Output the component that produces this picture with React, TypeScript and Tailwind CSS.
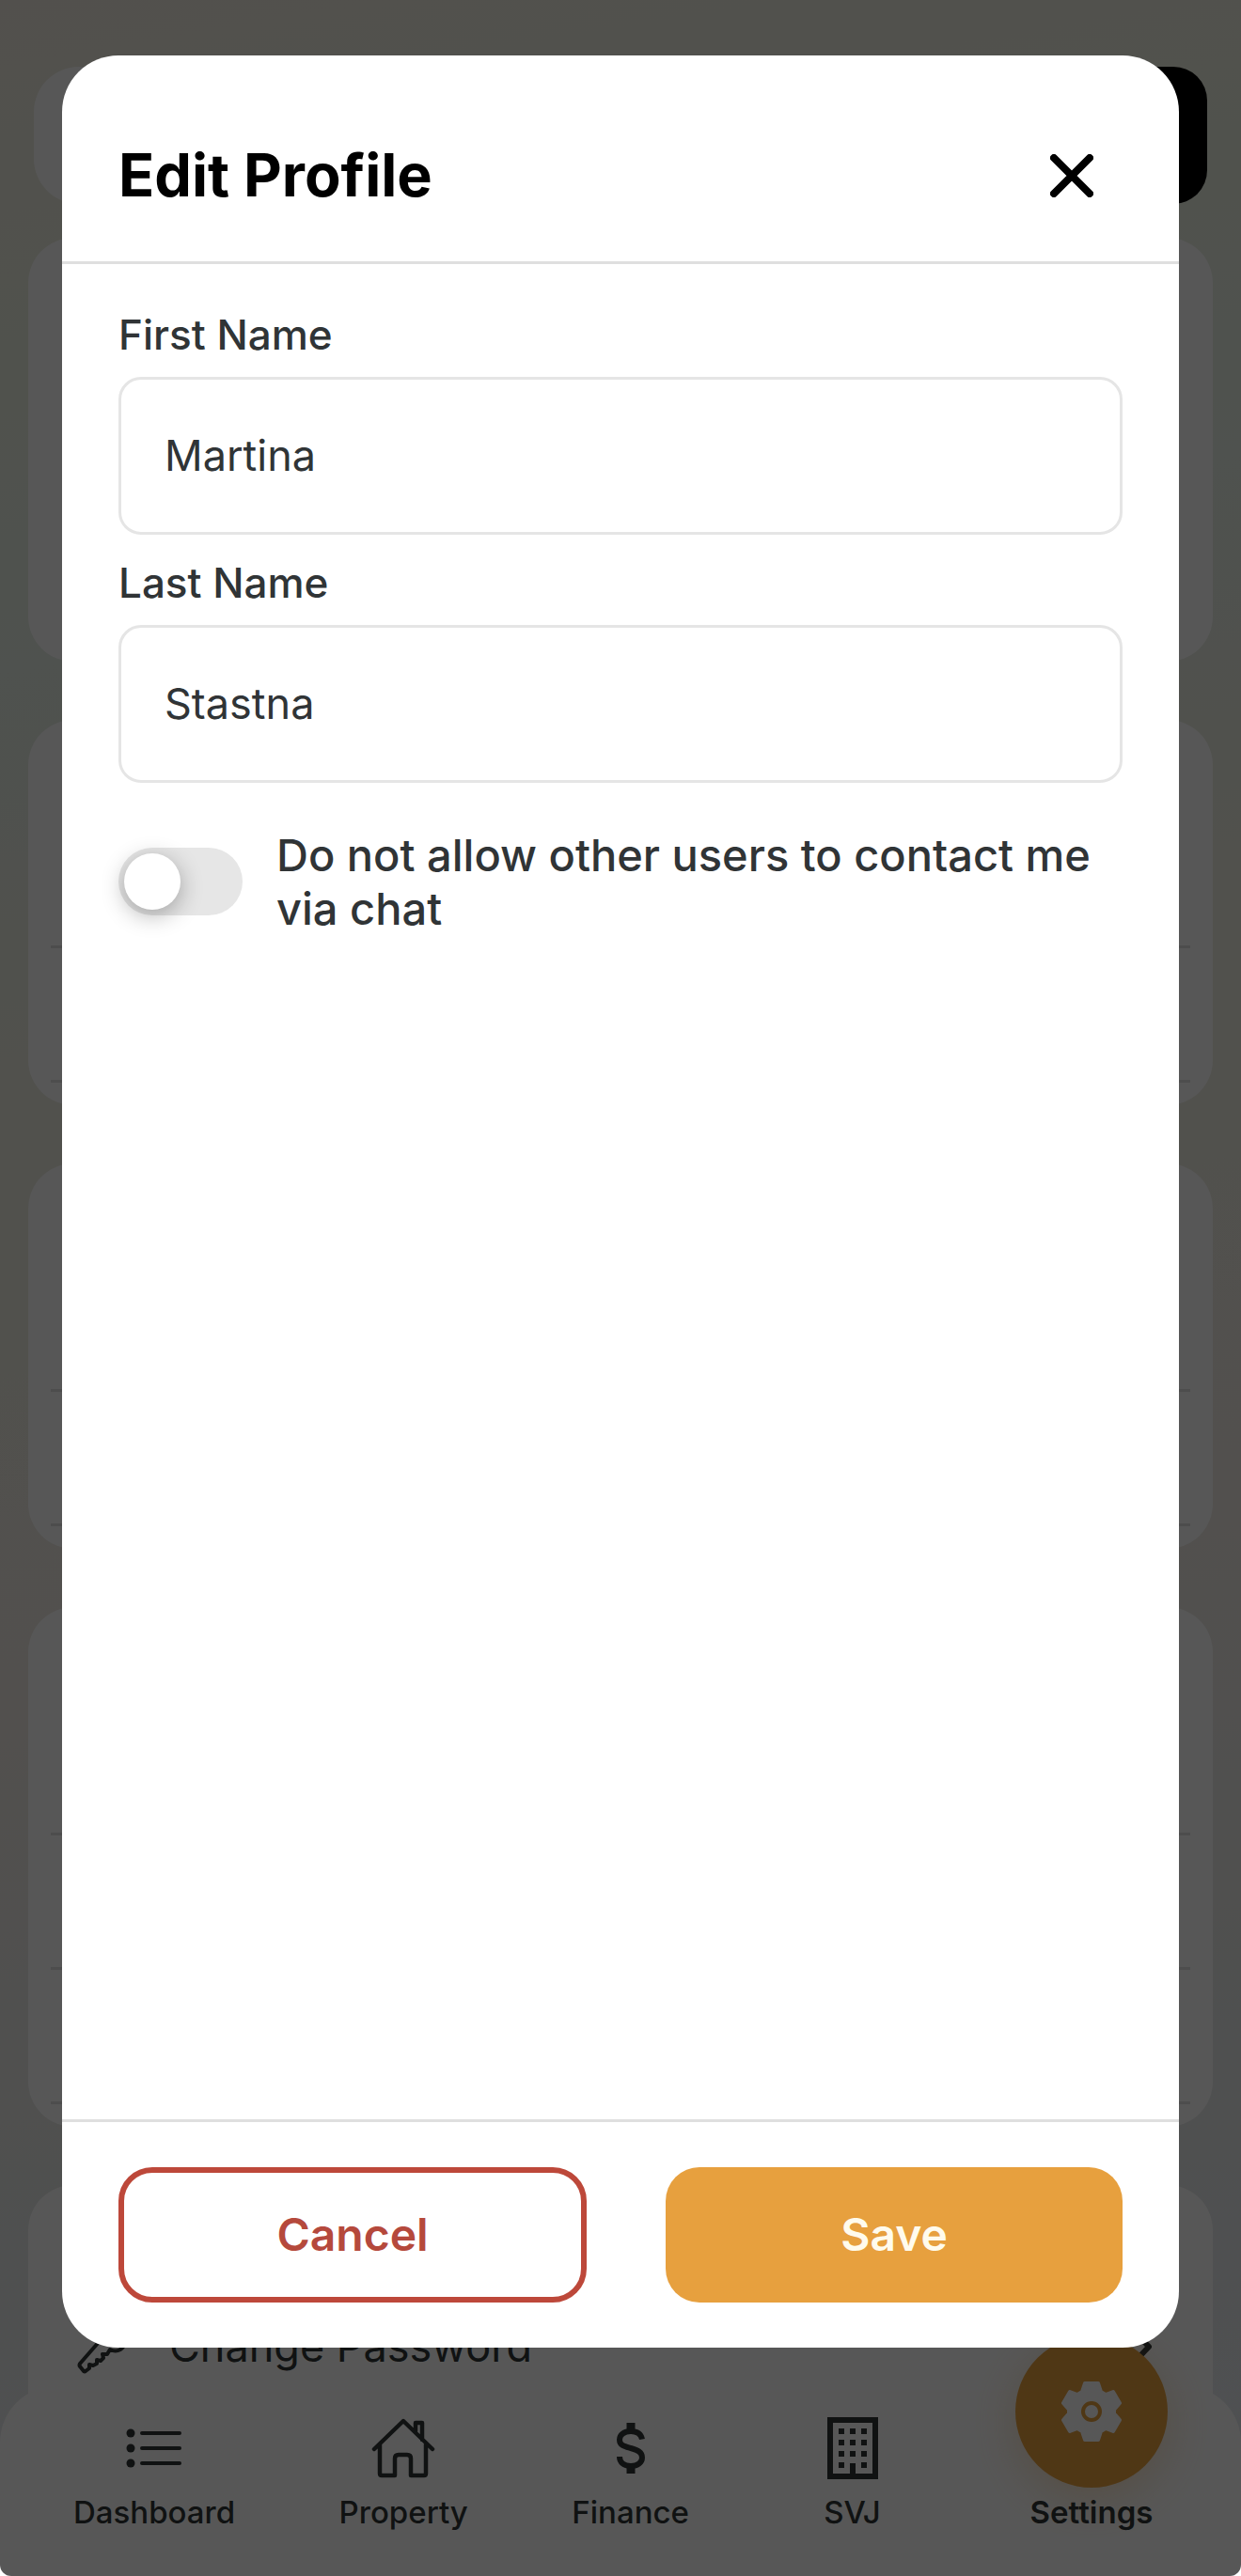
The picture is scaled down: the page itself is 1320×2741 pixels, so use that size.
import { useId, useState } from 'react'

const NAV_CLASS = 'flex flex-col items-center justify-end'

function ListIcon() {
  return (
    <svg viewBox="0 0 60 44" className="h-[44px] w-[60px]" stroke="currentColor" strokeWidth="4" strokeLinecap="round">
      <path d="M17 6h40M17 22h40M17 38h40" />
      <g fill="currentColor" stroke="none">
        <circle cx="5" cy="6" r="4.5" />
        <circle cx="5" cy="22" r="4.5" />
        <circle cx="5" cy="38" r="4.5" />
      </g>
    </svg>
  )
}

function HomeIcon() {
  return (
    <svg
      viewBox="0 0 68 66"
      className="h-[66px] w-[68px]"
      fill="none"
      stroke="currentColor"
      strokeWidth="4.5"
      strokeLinecap="round"
      strokeLinejoin="round"
    >
      <path d="M3 34 34 4l31 30M9 29v31q0 2 2 2h14V44q0-4 4-4h9q4 0 4 4v18h14q2 0 2-2V29M47 15V6h7v18" />
    </svg>
  )
}

function DollarIcon() {
  return (
    <svg viewBox="0 0 40 56" className="h-[56px] w-[40px]" fill="none" stroke="currentColor" strokeWidth="6">
      <path d="M20 1v9M20 46v9" strokeWidth="9" />
      <path d="M32 18.500c-1-5-5-8.500-12-8.500-7.500 0-12 4-12 9 0 6 5 7 12 9s12 4 12 10c0 5-4.500 9-12 9s-12-4-12-10" />
    </svg>
  )
}

function BuildingIcon() {
  return (
    <svg viewBox="0 0 54 66" className="h-[66px] w-[54px]" fill="currentColor">
      <path fillRule="evenodd" d="M0 0h54v66H0zM6 6v54h18V49h6v11h18V6z" />
      {[12, 24, 36, 48].map((y) =>
        [12, 24, 36].map((x) => (y === 48 && x === 24 ? null : <rect key={`${x}-${y}`} x={x} y={y} width="6" height="6" />))
      )}
    </svg>
  )
}

function GearIcon() {
  return (
    <svg viewBox="0 0 64 66" className="h-[66px] w-[64px]">
      <path
        fill="#ffffff"
        stroke="#ffffff"
        strokeWidth="4"
        strokeLinejoin="round"
        d="M25 3h14l3 9 5 3 8-3 7 12-6 7v4l6 7-7 12-8-3-5 3-3 9H25l-3-9-5-3-8 3-7-12 6-7v-4l-6-7 7-12 8 3 5-3z"
      />
      <circle cx="32" cy="33" r="9" fill="none" stroke="#e7a03e" strokeWidth="4" />
    </svg>
  )
}

function KeyIcon() {
  return (
    <svg
      viewBox="0 0 60 60"
      className="h-[60px] w-[60px]"
      fill="none"
      stroke="currentColor"
      strokeWidth="4"
      strokeLinejoin="round"
    >
      <path d="M24 24 3 48q-1 2 0 3l4 5q1 1 2 0l4-3v-4l4 1 4-2v-4l4 1 3-3-1-4 5 0 3-5q6 3 11 0a15 15 0 1 0-23-9z" />
    </svg>
  )
}

function SettingsCard({ rows }: { rows: number }) {
  return (
    <div className="rounded-[48px] bg-white p-6 pt-[100px]">
      {Array.from({ length: rows }, (_, i) => (
        <div key={i} className="h-[143px] border-b-3 border-[#e0e0e0]" />
      ))}
    </div>
  )
}

function SettingsPage() {
  return (
    <div className="absolute inset-0 overflow-hidden text-[#303636]">
      <div className="flex justify-between px-9 pt-[71px]">
        <div className="h-[146px] w-[146px] rounded-[48px] bg-white" />
        <div className="h-[146px] w-[146px] rounded-[36px] bg-black" />
      </div>
      <div className="flex flex-col gap-[62px] px-[30px] pt-9">
        <div className="h-[451px] rounded-[48px] bg-white" />
        <SettingsCard rows={2} />
        <SettingsCard rows={2} />
        <SettingsCard rows={3} />
        <div className="rounded-[48px] bg-white p-6 pt-[100px] pb-[100px]">
          <div className="flex h-[143px] items-center pr-10 pl-7 text-[45px]">
            <KeyIcon />
            <span className="flex-1 pl-[38px]">Change Password</span>
            <svg
              viewBox="0 0 24 42"
              className="h-[42px] w-[24px]"
              fill="none"
              stroke="currentColor"
              strokeWidth="6"
              strokeLinecap="round"
              strokeLinejoin="round"
            >
              <path d="M3 3l17 18L3 39" />
            </svg>
          </div>
        </div>
      </div>
      <nav className="absolute inset-x-0 bottom-0 flex h-[202px] justify-between rounded-t-[60px] bg-white px-[78px] pb-11 text-[33px] leading-[48px] font-medium">
        <a href="#dashboard" className={NAV_CLASS}>
          <span className="flex h-[68px] items-center">
            <ListIcon />
          </span>
          <span className="mt-[10px]">Dashboard</span>
        </a>
        <a href="#property" className={NAV_CLASS}>
          <span className="flex h-[68px] items-center">
            <HomeIcon />
          </span>
          <span className="mt-[10px]">Property</span>
        </a>
        <a href="#finance" className={NAV_CLASS}>
          <span className="flex h-[68px] items-center">
            <DollarIcon />
          </span>
          <span className="mt-[10px]">Finance</span>
        </a>
        <a href="#svj" className={`${NAV_CLASS} min-w-[126px]`}>
          <span className="flex h-[68px] items-center">
            <BuildingIcon />
          </span>
          <span className="mt-[10px]">SVJ</span>
        </a>
        <a href="#settings" className={`${NAV_CLASS} font-semibold`}>
          <span className="flex h-[162px] w-[162px] shrink-0 items-center justify-center rounded-full bg-[#e7a03e] shadow-[0_12px_48px_rgba(231,160,62,0.3)]">
            <GearIcon />
          </span>
          <span className="mt-0.5">Settings</span>
        </a>
      </nav>
    </div>
  )
}

function TextField({ label, value, onChange }: { label: string; value: string; onChange: (v: string) => void }) {
  const id = useId()

  return (
    <div>
      <label htmlFor={id} className="block text-[44px] leading-[54px] font-medium">
        {label}
      </label>
      <input
        id={id}
        type="text"
        value={value}
        onChange={(e) => onChange(e.target.value)}
        className="mt-[18px] block h-[168px] w-full rounded-3xl border-3 border-[#e5e5e5] bg-white px-[46px] pb-[2px] text-[45px] outline-none"
      />
    </div>
  )
}

export default function App() {
  const [firstName, setFirstName] = useState('Martina')
  const [lastName, setLastName] = useState('Stastna')
  const [noChat, setNoChat] = useState(false)

  return (
    <div className="h-screen bg-white font-['Inter',sans-serif]">
      <div className="relative flex h-full flex-col overflow-hidden rounded-b-xl bg-[linear-gradient(170deg,#f0ebe0_0%,#ecefe0_10%,#e6efe6_24%,#ecede0_38%,#f0ebe4_60%,#e8eae8_78%,#e8ecf2_100%)]">
        <SettingsPage />
        <div className="absolute inset-0 bg-black/66" />

        <div
          role="dialog"
          aria-labelledby="edit-profile-title"
          className="relative mx-[5%] mt-[59px] mb-[243px] flex flex-1 flex-col rounded-[60px] bg-white text-[#303436]"
        >
          {/* Header */}
          <div className="flex h-[222px] items-center justify-between border-b-3 border-[#dfdfdf] px-[60px] pt-9">
            <h2 id="edit-profile-title" className="text-[63px] font-bold text-black">
              Edit Profile
            </h2>
            <button type="button" aria-label="Close" className="flex h-[108px] w-[108px] items-center justify-center">
              <svg viewBox="0 0 46 46" className="h-[46px] w-[46px]" stroke="#000000" strokeWidth="8" strokeLinecap="round">
                <path d="M4 4l38 38M42 4 4 42" />
              </svg>
            </button>
          </div>

          {/* Form */}
          <div className="flex-1 px-[60px] pt-12">
            <TextField label="First Name" value={firstName} onChange={setFirstName} />
            <div className="h-6" />
            <TextField label="Last Name" value={lastName} onChange={setLastName} />

            <label className="mt-12 flex items-center gap-9">
              <span className="relative block h-[72px] w-[132px] shrink-0">
                <input
                  type="checkbox"
                  role="switch"
                  checked={noChat}
                  onChange={(e) => setNoChat(e.target.checked)}
                  className="peer block h-full w-full appearance-none rounded-full bg-[#e6e6e6] checked:bg-[#e7a03e]"
                />
                <span className="pointer-events-none absolute top-[6px] left-[6px] h-[60px] w-[60px] rounded-full bg-white shadow-[0_6px_24px_rgba(0,0,0,0.3)] peer-checked:left-[66px]" />
              </span>
              <span className="text-[47px] leading-[57px] font-medium">Do not allow other users to contact me via chat</span>
            </label>
          </div>

          {/* Footer */}
          <div className="flex gap-[84px] border-t-3 border-[#dfdfdf] px-[60px] py-12 text-[48px] font-semibold">
            <button type="button" className="h-36 flex-1 rounded-[36px] border-6 border-[#bd483a] text-[#b5493c]">
              Cancel
            </button>
            <button type="button" className="h-36 flex-1 rounded-[36px] bg-[#e7a03e] text-[#fffbed]">
              Save
            </button>
          </div>
        </div>
      </div>
    </div>
  )
}
